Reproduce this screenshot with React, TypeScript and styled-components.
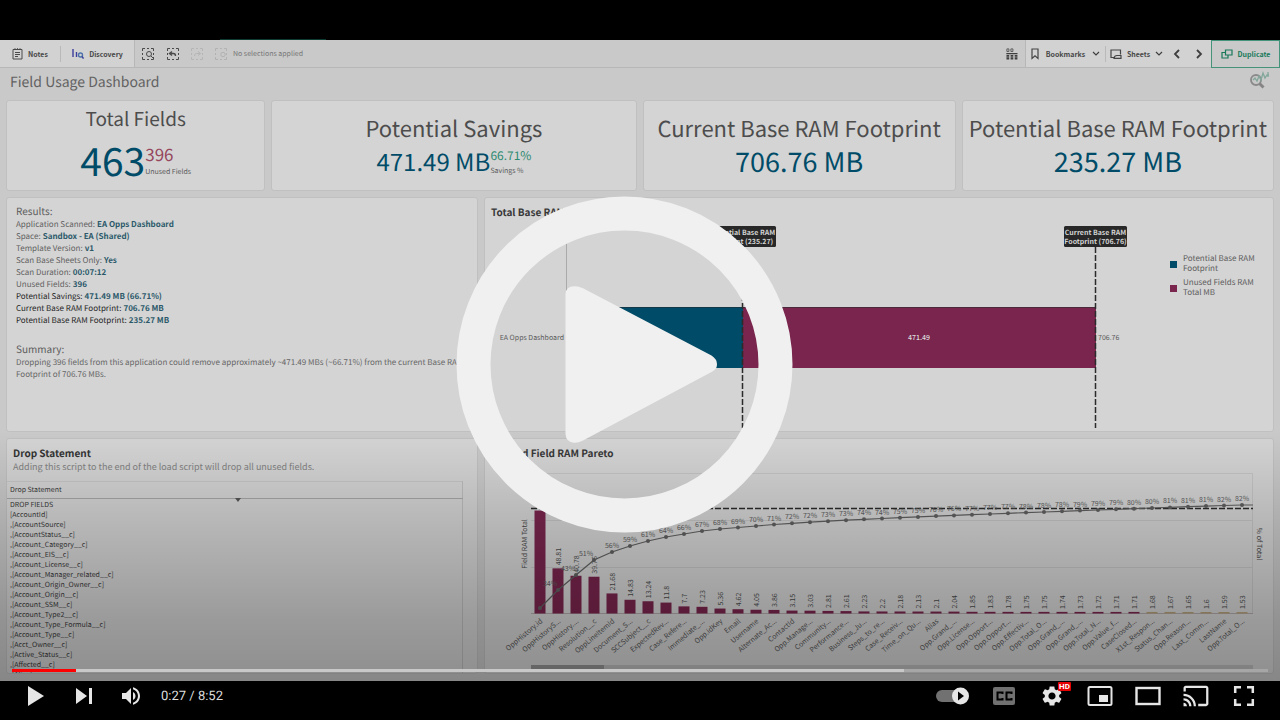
import React from "react";
import styled, { createGlobalStyle, css } from "styled-components";

const GlobalStyle = createGlobalStyle`
  *, *::before, *::after { box-sizing: border-box; }
  html, body { margin: 0; background: #000; }
  body {
    font-family: "Noto Sans CJK SC", "Open Sans", sans-serif;
    font-size: 8px;
    color: #5c5c5c;
    text-rendering: geometricPrecision;
  }
  h1, h2, h3, p, ul, dl, dd, dt { margin: 0; padding: 0; font-weight: 400; }
  button { margin: 0; padding: 0; border: 0; background: none; font: inherit; color: inherit; cursor: pointer; }
`;

const TEAL = "#004c68";
const PLUM = "#79254d";

const Player = styled.main`
  display: flex;
  flex-direction: column;
  min-height: 100vh;
  padding-top: 40px;
  background: #000;
`;

const Stage = styled.section`
  position: relative;
  display: flex;
  flex-direction: column;
  background: #c9c9c9;
  padding-bottom: 7px;
`;

const TabMark = styled.div`
  position: absolute;
  top: -1px;
  left: 220px;
  width: 106px;
  height: 1px;
  background: #0d3b31;
`;

/* ---------- Dashboard toolbar ---------- */

const Toolbar = styled.nav`
  display: flex;
  height: 28px;
  border-bottom: 1px solid #b7b7b7;
  font-size: 7px;
`;

const ToolGroup = styled.div<{ $raised?: boolean; $side?: "left" | "right" }>`
  display: flex;
  align-items: center;
  ${(p) => p.$raised && css`background: #d2d2d2;`}
  ${(p) => p.$side === "left" && css`border-right: 1px solid #b7b7b7;`}
  ${(p) => p.$side === "right" && css`border-left: 1px solid #b7b7b7;`}
`;

const Spacer = styled.div`
  flex: 1;
`;

const ToolButton = styled.button<{ $w: number; $divider?: boolean }>`
  display: flex;
  align-items: center;
  justify-content: center;
  gap: 5px;
  width: ${(p) => p.$w}px;
  height: 16px;
  font-weight: 700;
  line-height: 16px;
  color: #484848;
  white-space: nowrap;
  ${(p) => p.$divider && css`border-right: 1px solid #b9b9b9;`}
`;

const BookmarksButton = styled(ToolButton)`
  gap: 7px;
`;

const DuplicateButton = styled(ToolButton)`
  height: 28px;
  border: 1px solid #46937b;
  color: #17795a;
`;

const SelectionNote = styled.span`
  line-height: 16px;
  color: #777;
`;

const SheetHead = styled.header`
  display: flex;
  align-items: flex-start;
  justify-content: space-between;
  height: 32px;
  padding: 3px 10px 0;
`;

const SheetTitle = styled.h1`
  font-size: 14px;
  line-height: 22px;
  color: #626262;
`;

/* ---------- Cards ---------- */

const Board = styled.div`
  display: flex;
  flex-direction: column;
  gap: 6px;
  padding: 0 6px;
`;

const KpiRow = styled.div`
  display: grid;
  grid-template-columns: 260fr 366fr 314fr 313fr;
  gap: 6px;
`;

const PanelRow = styled.div`
  display: grid;
  grid-template-columns: 472fr 790fr;
  gap: 6px;
`;

const Card = styled.article<{ $h: number }>`
  display: flex;
  flex-direction: column;
  min-width: 0;
  min-height: ${(p) => p.$h}px;
  border: 1px solid #c0c0c0;
  border-radius: 3px;
  background: #d4d4d4;
`;

const KpiCard = styled(Card)`
  align-items: center;
  justify-content: center;
  padding-bottom: 3px;
  white-space: nowrap;
`;

const KpiTitle = styled.h2<{ $small?: boolean }>`
  font-size: ${(p) => (p.$small ? 19 : 22)}px;
  line-height: ${(p) => (p.$small ? 31 : 33)}px;
  color: #4d4d4d;
`;

const KpiLine = styled.div<{ $h: number }>`
  display: flex;
  align-items: center;
  height: ${(p) => p.$h}px;
`;

const KpiValue = styled.span<{ $size: number }>`
  font-size: ${(p) => p.$size}px;
  line-height: 32px;
  color: ${TEAL};
`;

const KpiSide = styled.span`
  display: flex;
  flex-direction: column;
  padding-top: 8px;
`;

const KpiSideValue = styled.span<{ $size: number; $color: string }>`
  font-size: ${(p) => p.$size}px;
  line-height: ${(p) => p.$size + 1}px;
  color: ${(p) => p.$color};
`;

const KpiSideLabel = styled.span`
  font-size: 7px;
  line-height: 19px;
`;

const ResultsCard = styled(Card)`
  padding: 6px 9px;
`;

const ResultsHeading = styled.h2<{ $gap?: boolean }>`
  font-size: 10px;
  line-height: 13px;
  margin-bottom: 2px;
  ${(p) => p.$gap && css`margin-top: 15px;`}
`;

const ResultLine = styled.div<{ $strong?: boolean }>`
  display: flex;
  gap: 2px;
  line-height: 12px;
  color: ${(p) => (p.$strong ? "#1f1f1f" : "#616161")};
  dd { font-weight: 700; color: #2b596a; }
`;

const SummaryText = styled.p`
  line-height: 12px;
  color: #666;
`;

const PanelTitle = styled.h2`
  padding: 4px 6px 4px;
  font-size: 10px;
  font-weight: 700;
  line-height: 20px;
  color: #383838;
`;

const ChartBody = styled.div`
  display: flex;
  flex: 1;
`;

const Chart = styled.svg`
  display: block;
  flex: 1;
  min-width: 0;
  width: 100%;
  height: auto;
`;

const Legend = styled.ul`
  width: 103px;
  padding-top: 28px;
  list-style: none;
`;

const LegendItem = styled.li<{ $color: string }>`
  display: flex;
  align-items: center;
  gap: 6px;
  margin-bottom: 4px;
  line-height: 10px;
  &::before {
    content: "";
    flex: none;
    width: 7px;
    height: 7px;
    background: ${(p) => p.$color};
  }
`;

const ScriptCard = styled(Card)`
  height: 236px;
  overflow: hidden;
`;

const ScriptHead = styled.div`
  padding: 6px 6px 7px;
`;

const ScriptTitle = styled.h2`
  font-size: 10px;
  font-weight: 700;
  line-height: 15px;
  color: #333;
`;

const ScriptNote = styled.p`
  font-size: 9px;
  line-height: 14px;
  color: #828282;
`;

const ScriptTable = styled.table`
  width: calc(100% - 14px);
  border-collapse: collapse;
  border-top: 1px solid #c6c6c6;
  border-right: 1px solid #bcbcbc;
  color: #3a3a3a;
  font-size: 7px;
  th {
    position: relative;
    height: 17px;
    padding: 0 3px;
    border-bottom: 1px solid #a6a6a6;
    font-weight: 400;
    line-height: 16px;
    text-align: left;
  }
  td { padding: 0 3px; line-height: 10px; }
  tbody::before { content: ""; display: block; height: 1px; }
`;

const SortMark = styled.i`
  position: absolute;
  left: 50%;
  bottom: -4px;
  border: 3px solid transparent;
  border-top: 4px solid #555;
  border-bottom: 0;
`;

/* ---------- Video overlay and controls ---------- */

const Shade = styled.div`
  position: absolute;
  inset: auto 0 0 0;
  height: 250px;
  pointer-events: none;
  background: linear-gradient(
    to bottom,
    rgba(0, 0, 0, 0) 0%,
    rgba(0, 0, 0, 0.05) 14%,
    rgba(0, 0, 0, 0.13) 34%,
    rgba(0, 0, 0, 0.2) 55%,
    rgba(0, 0, 0, 0.27) 75%,
    rgba(0, 0, 0, 0.33) 100%
  );
`;

const BigPlay = styled.button`
  position: absolute;
  top: 156px;
  left: calc(50% - 184px);
  width: 337px;
  height: 337px;
  svg { display: block; }
`;

const Seek = styled.input`
  position: absolute;
  left: 12px;
  bottom: 9px;
  width: calc(100% - 24px);
  height: 3px;
  margin: 0;
  appearance: none;
  background: linear-gradient(
    to right,
    #f00 var(--played),
    #c8c8c8 var(--played),
    #c8c8c8 var(--loaded),
    #a6a6a6 var(--loaded)
  );
  &::-webkit-slider-thumb { appearance: none; width: 0; height: 3px; }
`;

const Controls = styled.div`
  display: flex;
  height: 39px;
  padding: 0 12px;
  background: #000;
  color: #e6e6e6;
`;

const ControlButton = styled.button<{ $w?: number }>`
  position: relative;
  width: ${(p) => p.$w ?? 48}px;
  height: 30px;
  svg { display: block; width: 100%; height: 30px; fill: currentColor; }
`;

const Time = styled.span`
  padding-left: 5px;
  font-family: Roboto, sans-serif;
  font-size: 13px;
  line-height: 31px;
  color: #ddd;
`;

const HdBadge = styled.span`
  position: absolute;
  top: 1px;
  left: 30px;
  width: 13px;
  height: 9px;
  border-radius: 1px;
  background: #e60000;
  font-family: Roboto, sans-serif;
  font-size: 8px;
  font-weight: 700;
  line-height: 9px;
  text-align: center;
  color: #fff;
`;

/* ---------- Toolbar icons ---------- */

const NotesIcon = () => (
  <svg width="11" height="12" viewBox="0 0 11 12" fill="none" stroke="#4a4a4a">
    <path d="M1 1.5h9v9.5H1z M3 4.5h5 M3 6.5h5 M3 8.5h3" />
    <path d="M3 0v2M5.5 0v2M8 0v2" strokeWidth="0.8" />
  </svg>
);

const DiscoveryIcon = () => (
  <svg width="12" height="10" viewBox="0 0 12 10" fill="none" stroke="#3c3f9c" strokeWidth="1.4">
    <path d="M1 0v8M4.500 3v5" />
    <circle cx="8.500" cy="6" r="2" stroke="#4c72a8" />
    <path d="M10 7.500l1.500 2" />
  </svg>
);

const SelectFrame = ({ color, children }: { color: string; children: React.ReactNode }) => (
  <svg width="12" height="12" viewBox="0 0 12 12" fill="none" stroke={color}>
    <path d="M.5 3V.5H3M5 .5h2M9 .5h2.500V3M11.500 5v2M11.500 9v2.500H9M7 11.500H5M3 11.500H.5V9M.5 7V5" />
    {children}
  </svg>
);

const Chevron = ({ d, w = 8, thick = 1.2 }: { d: string; w?: number; thick?: number }) => (
  <svg width={w} height="10" viewBox={`0 0 ${w} 10`} fill="none" stroke="#3f3f3f" strokeWidth={thick}>
    <path d={d} />
  </svg>
);

const GridIcon = () => (
  <svg width="12" height="12" viewBox="0 0 12 12" fill="#3f3f3f">
    <path fill="none" stroke="#555" strokeWidth="0.900" d="M.9.900h2v2.600h-2zM4.900.900h2v2.600h-2z" />
    <path d="M.3 5h11.200v1.200H.3zM.5 7h2.700v4.500H.5zM4.600 7h2.700v4.500H4.600zM8.700 7h2.700v4.500H8.700z" />
    <path d="M.5 9h11" stroke="#c9c9c9" strokeWidth="0.500" />
  </svg>
);

const BookmarkIcon = () => (
  <svg width="8" height="12" viewBox="0 0 8 12" fill="none" stroke="#454545" strokeWidth="1.200">
    <path d="M1 1h6v9.500L4 7.800 1 10.500z" />
  </svg>
);

const SheetIcon = () => (
  <svg width="12" height="10" viewBox="0 0 12 10" fill="none" stroke="#454545" strokeWidth="1.200">
    <path d="M5 8.500H1V1h9.500v4.500" />
    <path d="M4 9.300Q4.500 6.500 7 6.500h4v2.800z" />
  </svg>
);

const DuplicateIcon = () => (
  <svg width="12" height="10" viewBox="0 0 12 10" fill="none" stroke="#17795a" strokeWidth="1.200">
    <path d="M4.500 1H11v5H4.500zM4 3.500H1V9h6V6.500" />
  </svg>
);

const InspectLogo = () => (
  <svg width="21" height="20" viewBox="0 0 21 20" fill="none">
    <circle cx="7" cy="9" r="5" stroke="#8b8b8b" strokeWidth="1.900" />
    <path d="M10.500 12.500l4 4" stroke="#858585" strokeWidth="3" />
    <path d="M4 9l2-2 2 3 2-5 2 4 2-7 2 5 2-3h2M19 1v5" stroke="#83a79a" strokeWidth="1.300" />
  </svg>
);

/* ---------- Data ---------- */

const results: { label: string; value: string; strong?: boolean }[] = [
  { label: "Application Scanned:", value: "EA Opps Dashboard" },
  { label: "Space:", value: "Sandbox - EA (Shared)" },
  { label: "Template Version:", value: "v1" },
  { label: "Scan Base Sheets Only:", value: "Yes" },
  { label: "Scan Duration:", value: "00:07:12" },
  { label: "Unused Fields:", value: "396" },
  { label: "Potential Savings:", value: "471.49 MB (66.71%)", strong: true },
  { label: "Current Base RAM Footprint:", value: "706.76 MB", strong: true },
  { label: "Potential Base RAM Footprint:", value: "235.27 MB", strong: true },
];

const scriptLines = [
  "DROP FIELDS", "[AccountId]", ",[AccountSource]", ",[AccountStatus__c]", ",[Account_Category__c]",
  ",[Account_EIS__c]", ",[Account_License__c]", ",[Account_Manager_related__c]",
  ",[Account_Origin_Owner__c]", ",[Account_Origin__c]", ",[Account_SSM__c]", ",[Account_Type2__c]",
  ",[Account_Type_Formula__c]", ",[Account_Type__c]", ",[Acct_Owner__c]", ",[Active_Status__c]",
  ",[Affected__c]", ",[Alias]",
];

// name, size in MB, cumulative share label, height of the line's point
const pareto: [string, number, string, number][] = [
  ["OppHistory.id", 111.3, "", 608], ["OppHistoryS...", 48.81, "34%", 590],
  ["OppHistory....", 40.78, "43%", 575], ["Resolution__c", 39.76, "51%", 560],
  ["OppLineItemId", 21.68, "56%", 552], ["Document_S...", 14.83, "59%", 546],
  ["SCCSubject__c", 13.24, "61%", 541], ["ExpectedRev...", 11.8, "64%", 537],
  ["Case_Refere...", 7.7, "66%", 534], ["Immediate_...", 7.23, "67%", 531],
  ["Opp.idKey", 5.36, "68%", 529], ["Email", 4.62, "69%", 527.5],
  ["Username", 4.05, "70%", 526], ["Alternate_Ac...", 3.86, "71%", 524.5],
  ["ContactId", 3.15, "72%", 523.3], ["Opp.Manage...", 3.03, "72%", 522.2],
  ["Community...", 2.81, "73%", 521.2], ["Performance...", 2.61, "73%", 520.2],
  ["Business_Ju...", 2.23, "74%", 519.3], ["Steps_to_re...", 2.2, "74%", 518.5],
  ["Case_Receiv...", 2.18, "75%", 517.7], ["Time_on_Qu...", 2.13, "75%", 516.9],
  ["Alias", 2.1, "76%", 516.1], ["Opp.Grand_...", 2.04, "76%", 515.4],
  ["Opp.License...", 1.85, "77%", 514.7], ["Opp.Opport...", 1.83, "77%", 514],
  ["Opp.Opport...", 1.78, "77%", 513.3], ["Opp.Effectiv...", 1.75, "78%", 512.6],
  ["Opp.Total_O...", 1.75, "78%", 512], ["Opp.Grand_...", 1.74, "78%", 511.3],
  ["Opp.Grand_...", 1.73, "79%", 510.6], ["Opp.Total_N...", 1.72, "79%", 510],
  ["Opp.Value_f...", 1.71, "79%", 509.3], ["CaseClosed...", 1.71, "80%", 508.7],
  ["X1st_Respon...", 1.68, "80%", 508], ["Status_Chan...", 1.67, "81%", 507.4],
  ["Opp.Reason...", 1.65, "81%", 506.7], ["Last_Comm...", 1.6, "81%", 506.1],
  ["LastName", 1.59, "82%", 505.5], ["Opp.Total_O...", 1.53, "82%", 505],
];

/* ---------- Charts ---------- */

const FootprintChart = () => (
  <Chart viewBox="485 226 685 205" role="img" aria-label="Total Base RAM Footprint">
    <path d="M566.5 230V430" stroke="#aaa" />
    <text x="564" y="340" textAnchor="end" fontSize="7" fill="#5c5c5c">EA Opps Dashboard</text>
    <rect x="567" y="307" width="176" height="61" fill={TEAL} />
    <rect x="743" y="307" width="353" height="61" fill={PLUM} />
    <path d="M567 307.500H743" stroke="#12394a" />
    <path d="M743 307.500H1096" stroke="#4c2a3b" />
    <path d="M742.500 247V428M1095.500 247V428" stroke="#2b2b2b" strokeWidth="1.500" strokeDasharray="6 2" />
    <text x="919" y="340" textAnchor="middle" fontSize="7" fontWeight="500" fill="#ddd">471.49</text>
    <text x="1098" y="340" fontSize="7" fill="#5c5c5c">706.76</text>
    {[{ x: 742, name: "Potential Base RAM", v: "235.27", w: 68 }, { x: 1095.5, name: "Current Base RAM", v: "706.76", w: 63 }].map((m) => (
      <g key={m.name} fontSize="7" fontWeight="700" fill="#d2d2d2" textAnchor="middle">
        <rect x={m.x - m.w / 2} y="226" width={m.w} height="21" rx="1.500" fill="#282828" />
        <text x={m.x} y="235">{m.name}</text>
        <text x={m.x} y="244">{`Footprint (${m.v})`}</text>
      </g>
    ))}
  </Chart>
);

const BASE = 613.5;

const ParetoChart = () => {
  const xAt = (i: number) => 540 + i * 18;
  return (
    <Chart viewBox="485 467 788 206" role="img" aria-label="Unused Field RAM Pareto">
      <path d="M531 473.500H1253M531 520.500H1253M531 567.500H1253M1252.500 473V613" stroke="#c4c4c4" fill="none" />
      <path d={`M531 ${BASE}H1253`} stroke="#b0a8a8" />
      {pareto.map(([name, v], i) => {
        const h = v * 0.925;
        return (
          <g key={i}>
            <rect x={xAt(i) - 5.5} y={BASE - h} width="11" height={h} fill={i < 34 ? PLUM : "#b5a078"} />
            {i > 0 && (
              <text fontSize="7" fill="#4b4b4b" transform={`translate(${xAt(i) + 3} ${BASE - h - 3}) rotate(-90)`}>{v}</text>
            )}
            <text fontSize="7" fill="#555" textAnchor="end" transform={`translate(${xAt(i) + 3} 622) rotate(-40)`}>{name}</text>
          </g>
        );
      })}
      <path d="M531 508.500H1253" stroke="#2b2b2b" strokeWidth="1.500" strokeDasharray="6 2" />
      <polyline
        fill="none"
        stroke="#5f5f5f"
        strokeWidth="1.200"
        points={pareto.map((p, i) => `${xAt(i)},${p[3]}`).join(" ") + " 1253,505"}
      />
      {pareto.map(([, , share, y], i) => (
        <g key={i} fill="#5f5f5f">
          <circle cx={xAt(i)} cy={y} r="2" />
          <text x={xAt(i) - (i < 4 ? 8 : 0)} y={y - 4} fontSize="7" textAnchor="middle">{share}</text>
        </g>
      ))}
      <text fontSize="7" fill="#484848" textAnchor="middle" transform="translate(527 544) rotate(-90)">Field RAM Total</text>
      <text fontSize="7" fill="#484848" textAnchor="middle" transform="translate(1257 544) rotate(90)">% of Total</text>
      <rect x="531" y="665" width="722" height="4" fill="#bcbcbc" />
      <rect x="531" y="665" width="73" height="4" fill="#949494" />
    </Chart>
  );
};

/* ---------- Page ---------- */

export default function App() {
  return (
    <Player>
      <GlobalStyle />
      <Stage>
        <TabMark />
        <Toolbar>
          <ToolGroup $raised $side="left">
            <ToolButton $w={61} $divider><NotesIcon />Notes</ToolButton>
            <ToolButton $w={73}><DiscoveryIcon />Discovery</ToolButton>
          </ToolGroup>
          <ToolGroup>
            <ToolButton $w={26} aria-label="Smart search">
              <SelectFrame color="#4a4a4a"><circle cx="7" cy="6" r="2.500" /><path d="M9 8l2.500 2.500" /></SelectFrame>
            </ToolButton>
            <ToolButton $w={24} aria-label="Step back">
              <SelectFrame color="#4a4a4a"><path d="M2.500 5.500h4q2 0 2 2.500M5 3.500L2.500 5.500 5 7.500" strokeWidth="1.400" /></SelectFrame>
            </ToolButton>
            <ToolButton $w={24} aria-label="Step forward">
              <SelectFrame color="#b5b5b5"><path d="M9.500 5.500h-4q-2 0-2 2.500M7 3.500l2.500 2L7 7.500" /></SelectFrame>
            </ToolButton>
            <ToolButton $w={24} aria-label="Clear selections">
              <SelectFrame color="#b2b2b2"><circle cx="8" cy="6.500" r="2.200" /></SelectFrame>
            </ToolButton>
            <SelectionNote>No selections applied</SelectionNote>
          </ToolGroup>
          <Spacer />
          <ToolGroup>
            <ToolButton $w={26} aria-label="Layout"><GridIcon /></ToolButton>
          </ToolGroup>
          <ToolGroup $raised $side="right">
            <BookmarksButton $w={80} $divider><BookmarkIcon />Bookmarks<Chevron d="M1 3l3 3 3-3" /></BookmarksButton>
            <ToolButton $w={61}><SheetIcon />Sheets<Chevron d="M1 3l3 3 3-3" /></ToolButton>
            <ToolButton $w={20} aria-label="Previous sheet"><Chevron d="M6 1L2 5l4 4" thick={1.8} /></ToolButton>
            <ToolButton $w={24} aria-label="Next sheet"><Chevron d="M2 1l4 4-4 4" thick={1.8} /></ToolButton>
          </ToolGroup>
          <DuplicateButton $w={69}><DuplicateIcon />Duplicate</DuplicateButton>
        </Toolbar>

        <SheetHead>
          <SheetTitle>Field Usage Dashboard</SheetTitle>
          <InspectLogo />
        </SheetHead>

        <Board>
          <KpiRow>
            <KpiCard $h={91}>
              <KpiTitle $small>Total Fields</KpiTitle>
              <KpiLine $h={52}>
                <KpiValue $size={39}>463</KpiValue>
                <KpiSide>
                  <KpiSideValue $size={17} $color="#96465c">396</KpiSideValue>
                  <KpiSideLabel>Unused Fields</KpiSideLabel>
                </KpiSide>
              </KpiLine>
            </KpiCard>
            <KpiCard $h={91}>
              <KpiTitle>Potential Savings</KpiTitle>
              <KpiLine $h={32}>
                <KpiValue $size={24}>471.49 MB</KpiValue>
                <KpiSide>
                  <KpiSideValue $size={12} $color="#2d8a70">66.71%</KpiSideValue>
                  <KpiSideLabel>Savings %</KpiSideLabel>
                </KpiSide>
              </KpiLine>
            </KpiCard>
            <KpiCard $h={91}>
              <KpiTitle>Current Base RAM Footprint</KpiTitle>
              <KpiLine $h={32}><KpiValue $size={27}>706.76 MB</KpiValue></KpiLine>
            </KpiCard>
            <KpiCard $h={91}>
              <KpiTitle>Potential Base RAM Footprint</KpiTitle>
              <KpiLine $h={32}><KpiValue $size={27}>235.27 MB</KpiValue></KpiLine>
            </KpiCard>
          </KpiRow>

          <PanelRow>
            <ResultsCard $h={235}>
              <ResultsHeading>Results:</ResultsHeading>
              <dl>
                {results.map((r) => (
                  <ResultLine key={r.label} $strong={r.strong}>
                    <dt>{r.label}</dt>
                    <dd>{r.value}</dd>
                  </ResultLine>
                ))}
              </dl>
              <ResultsHeading $gap>Summary:</ResultsHeading>
              <SummaryText>
                Dropping 396 fields from this application could remove approximately ~471.49 MBs (~66.71%) from the current Base RAM Footprint of 706.76 MBs.
              </SummaryText>
            </ResultsCard>
            <Card $h={235}>
              <PanelTitle>Total Base RAM Footprint</PanelTitle>
              <ChartBody>
                <FootprintChart />
                <Legend>
                  <LegendItem $color={TEAL}>Potential Base RAM<br />Footprint</LegendItem>
                  <LegendItem $color={PLUM}>Unused Fields RAM<br />Total MB</LegendItem>
                </Legend>
              </ChartBody>
            </Card>
          </PanelRow>

          <PanelRow>
            <ScriptCard $h={236}>
              <ScriptHead>
                <ScriptTitle>Drop Statement</ScriptTitle>
                <ScriptNote>Adding this script to the end of the load script will drop all unused fields.</ScriptNote>
              </ScriptHead>
              <ScriptTable>
                <thead>
                  <tr><th scope="col">Drop Statement<SortMark /></th></tr>
                </thead>
                <tbody>
                  {scriptLines.map((line) => (
                    <tr key={line}><td>{line}</td></tr>
                  ))}
                </tbody>
              </ScriptTable>
            </ScriptCard>
            <Card $h={236}>
              <PanelTitle>Unused Field RAM Pareto</PanelTitle>
              <ChartBody><ParetoChart /></ChartBody>
            </Card>
          </PanelRow>
        </Board>

        <Shade />
        <Seek
          type="range"
          aria-label="Seek"
          min={0}
          max={532}
          defaultValue={27}
          style={{ "--played": "5.1%", "--loaded": "71%" } as React.CSSProperties}
        />
        <BigPlay aria-label="Play video">
          <svg width="337" height="337" viewBox="0 0 337 337" fill="#f0f0f0">
            <circle cx="168.500" cy="168.500" r="151" fill="none" stroke="#f0f0f0" strokeWidth="34" />
            <path d="M109.500 98Q110 90.500 118 90.300Q122 90 127 92.300L255.500 159.500Q261 163 261 168.500Q261 173.500 255.500 176L127 244.500Q122 247 118 246.700Q110 246 109.500 238Z" />
          </svg>
        </BigPlay>
      </Stage>

      <Controls>
        <ControlButton aria-label="Play">
          <svg viewBox="0 0 48 30"><path d="M16 5v20l16-10z" /></svg>
        </ControlButton>
        <ControlButton aria-label="Next">
          <svg viewBox="0 0 48 30"><path d="M16 7v16l11-8zM29 7h3v16h-3z" /></svg>
        </ControlButton>
        <ControlButton aria-label="Mute">
          <svg viewBox="-6 3 48 30">
            <path d="M8 21h4l5 5V10l-5 5H8zM19 14v8c1.480-.68 2.500-2.230 2.500-4S20.480 14.740 19 14zM19 11.290c2.890.86 5 3.540 5 6.710s-2.110 5.850-5 6.710v2.060c4.010-.91 7-4.490 7-8.770s-2.990-7.860-7-8.770z" />
          </svg>
        </ControlButton>
        <Time>0:27 / 8:52</Time>
        <Spacer />
        <ControlButton $w={56} aria-label="Autoplay">
          <svg viewBox="0 0 56 30">
            <rect x="12" y="9" width="30" height="12" rx="6" fill="#717171" />
            <circle cx="36.500" cy="15" r="8.500" />
            <path d="M34 10.500v9l6-4.500z" fill="#000" />
          </svg>
        </ControlButton>
        <ControlButton aria-label="Subtitles">
          <svg viewBox="0 0 48 30">
            <rect x="13" y="6" width="22" height="18" rx="2" fill="#717171" />
            <path d="M22.500 13v-1.500h-5v7h5V17M31.500 13v-1.500h-5v7h5V17" fill="none" stroke="#000" strokeWidth="2" />
          </svg>
        </ControlButton>
        <ControlButton aria-label="Settings">
          <svg viewBox="0 0 48 30">
            <path transform="translate(12 3)" fillRule="evenodd" d="M19.140 12.940c.04-.3.06-.61.06-.94 0-.32-.02-.64-.07-.94l2.030-1.580c.18-.14.23-.41.12-.61l-1.920-3.320c-.12-.22-.37-.29-.59-.22l-2.390.96c-.5-.38-1.030-.7-1.620-.94l-.36-2.540c-.04-.24-.24-.41-.48-.41h-3.840c-.24 0-.43.17-.47.41l-.36 2.540c-.59.24-1.130.57-1.620.94l-2.390-.96c-.22-.08-.47 0-.59.22L2.740 8.870c-.12.21-.08.47.12.61l2.030 1.580c-.05.3-.09.63-.09.94s.02.64.07.94l-2.030 1.580c-.18.14-.23.41-.12.61l1.920 3.320c.12.22.37.29.59.22l2.390-.96c.5.38 1.030.7 1.620.94l.36 2.540c.05.24.24.41.48.41h3.840c.24 0 .44-.17.47-.41l.36-2.540c.59-.24 1.130-.56 1.620-.94l2.390.96c.22.08.47 0 .59-.22l1.920-3.320c.12-.22.07-.47-.12-.61zM12 15.600c-1.980 0-3.600-1.620-3.600-3.600s1.620-3.600 3.600-3.600 3.600 1.620 3.600 3.600-1.620 3.600-3.600 3.600z" />
          </svg>
          <HdBadge>HD</HdBadge>
        </ControlButton>
        <ControlButton aria-label="Miniplayer">
          <svg viewBox="0 0 48 30">
            <rect x="12.500" y="6" width="23" height="18" rx="1.500" fill="none" stroke="currentColor" strokeWidth="2" />
            <path d="M23 14h9v7h-9z" />
          </svg>
        </ControlButton>
        <ControlButton aria-label="Theater mode">
          <svg viewBox="0 0 48 30">
            <rect x="12.500" y="7" width="23" height="16" fill="none" stroke="currentColor" strokeWidth="2.400" />
          </svg>
        </ControlButton>
        <ControlButton aria-label="Play on TV">
          <svg viewBox="0 0 48 30">
            <path transform="translate(10.400 1.400) scale(1.130)" d="M21 3H3c-1.100 0-2 .9-2 2v3h2V5h18v14h-7v2h7c1.100 0 2-.9 2-2V5c0-1.100-.9-2-2-2zM1 18v3h3c0-1.660-1.340-3-3-3zm0-4v2c2.760 0 5 2.240 5 5h2c0-3.870-3.130-7-7-7zm0-4v2c4.970 0 9 4.030 9 9h2c0-6.080-4.930-11-11-11z" />
          </svg>
        </ControlButton>
        <ControlButton aria-label="Full screen">
          <svg viewBox="0 0 48 30">
            <path d="M15.200 12V6.200H21M27 6.200h5.800V12M32.800 18v5.800H27M21 23.800h-5.800V18" fill="none" stroke="currentColor" strokeWidth="2.500" />
          </svg>
        </ControlButton>
      </Controls>
    </Player>
  );
}
